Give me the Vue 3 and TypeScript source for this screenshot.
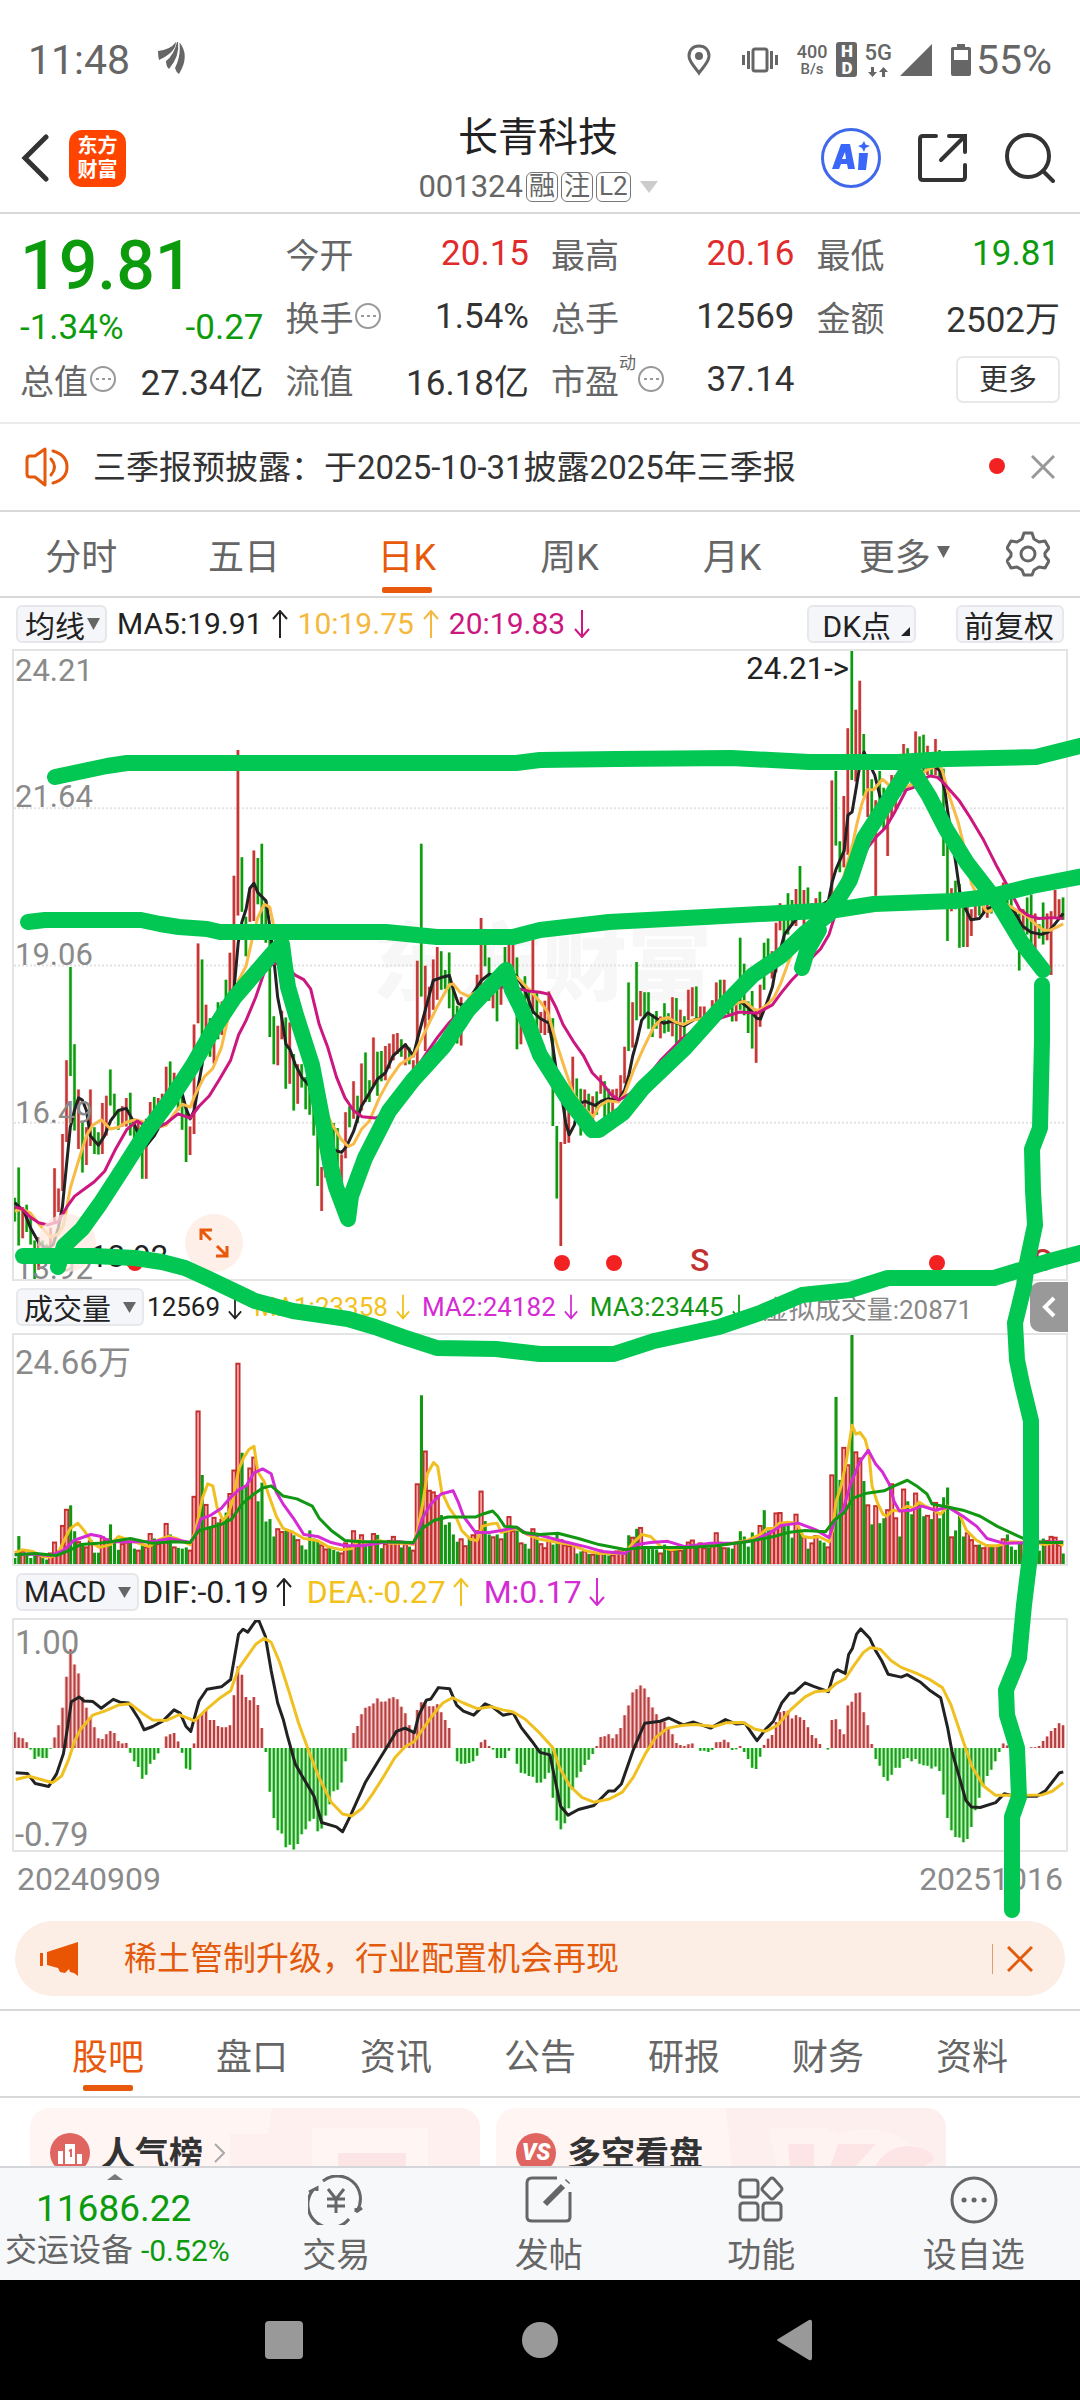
<script setup lang="ts">
import { ref } from 'vue'

/* Every panel is plotted on the same horizontal scale: one bar each 11.61 units. */
const FIRST_X = 38
const STEP = 11.61
const barX = (i: number): number => Math.round((FIRST_X + i * STEP) * 10) / 10

/* Indexes of the trading days that closed lower. */
const downDays = new Set<number>([
  0, 1, 3, 4, 5, 7, 8, 14, 15, 17, 20, 21, 24, 25, 26, 29, 30, 32, 35, 39, 41, 42, 43, 47, 49, 51, 53, 57, 58, 61,
  62, 63, 64, 65, 68, 70, 72, 73, 74, 75, 76, 79, 80, 81, 84, 86, 88, 89, 91, 92, 97, 99, 102, 107, 108, 109, 110,
  111, 114, 118, 119, 121, 123, 126, 128, 129, 131, 135, 136, 141, 142, 144, 146, 148, 149, 154, 156, 158, 159,
  160, 161, 163, 164, 166, 168, 171, 174, 177, 179, 180, 182, 183, 184, 185, 188, 189, 193, 194, 195, 197, 199,
  202, 203, 206, 207, 210, 213, 215, 217, 218, 222, 224, 225, 227, 228, 230, 232, 233, 234, 236, 237, 238, 242,
  245, 247, 249, 250, 251, 252, 254, 255, 257, 258, 263,
])

/* High and low of each day. */
const ranges = `1328-1385 1256-1442 1350-1425 1345-1410 1375-1440 1430-1524 1422-1500 1430-1450 1440-1475 1400-1450
1258-1385 1306-1362 1176-1312 1000-1195 778-1038 962-1168 1070-1212 1145-1268 1160-1250 1070-1205
1160-1224 1172-1225 1102-1224 1085-1180 1022-1108 1080-1130 1120-1166 1110-1158 1090-1158 1078-1180
1140-1230 1150-1200 1150-1283 1140-1283 1100-1180 1088-1160 1090-1150 1080-1140 1016-1090 1003-1080
1030-1105 1060-1120 1050-1166 1110-1243 1158-1226 915-1176 722-912 760-950 868-960 900-992
900-1008 862-950 860-940 808-900 744-850 560-840 260-655 516-646 658-752 590-670
500-668 518-628 484-675 620-720 680-945 895-1010 918-1012 882-950 898-1068 910-1056
985-1120 1010-1104 1010-1065 1040-1117 1060-1130 1080-1180 1120-1300 1255-1360 1200-1280 1180-1300
1150-1230 1162-1310 1225-1295 1124-1234 1110-1160 1050-1140 1085-1150 1008-1120 982-1100 1048-1100
946-1062 980-1085 978-1050 966-1048 960-1020 938-1000 935-985 950-992 960-1012 970-1010
1000-1065 763-1030 484-848 775-978 825-905 760-880 730-856 740-832 785-830 743-876
820-930 870-960 850-965 870-920 860-900 850-890 796-870 661-830 715-776 755-858
800-876 830-907 790-868 730-800 710-830 720-800 755-974 880-962 800-900 830-920
708-890 840-940 885-935 858-940 836-935 900-1157 1157-1330 1195-1443 1100-1200 1090-1197
992-1105 1044-1120 1068-1180 1070-1130 1080-1140 1086-1150 1075-1130 1036-1080 1050-1150 1068-1150
1070-1140 1068-1100 1036-1090 968-1055 815-978 862-970 766-905 835-895 838-900 838-925
890-945 883-925 896-948 864-936 888-932 850-943 852-962 880-965 895-950 832-905
826-895 824-900 872-905 872-930 885-905 857-890 815-880 808-860 808-850 840-890
830-908 840-907 708-880 770-893 860-935 835-972 880-1006 820-920 720-832 710-780
740-805 672-790 626-690 650-760 602-700 618-680 592-680 537-660 594-680 588-650
625-660 614-660 598-640 630-680 620-660 333-620 310-488 478-552 370-540 208-510
24-332 164-335 95-280 222-370 300-420 330-440 380-608 310-430 350-450 400-513
320-420 320-400 310-370 246-360 256-340 290-340 216-350 228-330 224-330 250-320
290-320 234-320 260-330 305-513 430-716 590-645 572-640 580-732 620-730 630-730
640-704 600-660 610-655 600-650 600-660 590-650 600-640 600-650 576-620 590-650
610-670 640-720 650-786 640-700 612-700 605-740 650-745 676-710 624-724 650-714
645-797 594-660 616-660 612-665`.split(/\s+/).map((r) => r.split('-').map(Number))

const toNumbers = (text: string): number[] => text.trim().split(/\s+/).map(Number)

const VOLUME_BASE = 723
const volumes = toNumbers(`708 654 690 700 708 702 700 705 712 695 668 690 627 587 578 642 667 675 680 665 695 695 655 660 625
665 688 672 668 660 685 688 675 680 647 660 672 668 622 650 680 683 685 682 688 555 344 503 575 630 607 620 612 596 548
490 226 448 530 485 458 568 522 618 612 655 635 642 640 640 652 662 677 687 640 660 665 675 685 682 688 692 695 670 680
640 668 650 672 670 647 651 684 672 664 654 665 682 672 680 688 524 306 443 540 544 553 602 626 620 650 668 660 677 658
650 640 542 617 650 655 650 660 640 605 640 640 670 673 685 635 650 672 682 665 675 650 662 675 677 675 697 692 690 698
698 698 688 698 702 700 690 690 685 652 656 636 632 680 682 685 687 695 675 682 688 685 688 682 668 663 675 670 682 683
672 645 668 682 682 685 670 642 655 680 645 655 627 590 640 640 596 595 620 622 658 599 640 655 685 670 652 665 670 680
502 310 515 434 477 157 445 460 518 576 625 578 622 610 588 524 608 655 537 568 600 547 575 605 602 612 570 610 558 534
655 640 600 655 645 662 676 675 682 675 680 677 675 660 650 680 688 670 670 680 680 675 690 660 664 654 656 675 697`)

const MACD_ZERO = 1171
const histogram = toNumbers(`1132 1145 1147 1157 1175 1198 1192 1196 1196 1173 1145 1115 1072 995 927 965 987 1046 1072 1095 1120 1147
1149 1137 1129 1134 1154 1160 1159 1183 1204 1218 1247 1237 1210 1200 1184 1171 1143 1137 1134 1155 1183 1222 1225 1160
1095 1087 1077 1102 1102 1117 1120 1120 1115 1041 970 990 1045 1053 1045 1065 1122 1181 1279 1344 1374 1382 1416 1410
1422 1408 1384 1372 1352 1346 1377 1370 1338 1310 1278 1274 1256 1204 1172 1134 1117 1088 1072 1068 1061 1049 1057 1056
1049 1046 1051 1069 1085 1115 1132 1077 1058 1057 1068 1068 1063 1083 1102 1122 1171 1204 1210 1210 1208 1204 1190 1157
1151 1166 1175 1196 1196 1196 1178 1171 1210 1232 1234 1240 1242 1257 1256 1247 1232 1294 1350 1372 1357 1320 1275 1244
1230 1213 1200 1186 1166 1144 1142 1137 1147 1137 1122 1090 1066 1034 1026 1017 1024 1046 1071 1088 1104 1106 1122 1137
1159 1164 1166 1162 1160 1171 1178 1178 1181 1176 1157 1156 1151 1157 1176 1174 1166 1181 1198 1220 1223 1193 1164 1148
1139 1107 1083 1080 1079 1098 1090 1095 1102 1120 1139 1147 1161 1171 1175 1102 1100 1125 1137 1066 1057 1036 1034 1083
1115 1161 1198 1215 1243 1252 1237 1220 1220 1198 1196 1204 1198 1210 1214 1215 1222 1217 1228 1286 1344 1374 1391 1392
1404 1396 1366 1325 1294 1267 1240 1225 1204 1181 1160 1165 1170 1170 1171 1175 1171 1169 1169 1166 1154 1143 1129 1122
1110 1115`)

const candlePath = (down: boolean): string =>
  ranges.map(([hi, lo], i) => (downDays.has(i) === down ? `M${barX(i)} ${hi}V${lo}` : '')).join('')
const volumeBars = volumes.map((top, i) => ({ i, top }))
const upVolumes = volumeBars.filter((v) => !downDays.has(v.i))
const downVolumes = volumeBars.filter((v) => downDays.has(v.i))
const histPath = (up: boolean): string =>
  histogram.map((y, i) => (y < MACD_ZERO === up ? `M${barX(i)} ${MACD_ZERO}V${y}` : '')).join('')

const ma5 = `38,1340 65,1360 84,1400 108,1435 131,1450 150,1440 165,1400 177,1350 189,1250 200,1160 212,1120 224,1090 235,1095 247,1120 258,1180 282,1203 300,1180 317,1145 340,1120 363,1115 380,1140 400,1180 421,1204 445,1180 468,1145 490,1110 514,1060 526,1080 537,1115 549,1140 561,1120 572,1065 584,1010 596,940 610,915 640,900 665,870 677,830 689,720 700,670 712,640 723,590 735,578 746,600 770,620 781,680 793,760 804,850 816,900 828,962 840,975 855,1010 875,1042 895,1060 920,1120 945,1190 970,1215 990,1220 1005,1205 1025,1170 1048,1110 1070,1080 1095,1045 1118,1030 1140,990 1176,963 1199,990 1211,950 1234,880 1257,810 1280,803 1304,798 1315,830 1330,865 1350,870 1373,840 1397,810 1420,795 1443,800 1478,790 1500,800 1525,835 1548,885 1568,900 1594,912 1606,970 1618,1040 1632,1090 1643,1150 1653,1178 1668,1155 1680,1105 1699,1098 1728,1108 1748,1097 1768,1092 1796,1098 1815,1070 1827,1035 1838,990 1850,955 1864,905 1882,887 1903,898 1928,912 1953,907 1988,918 2018,903 2048,900 2082,880 2117,870 2148,858 2175,875 2199,900 2210,902 2228,865 2245,825 2257,770 2280,700 2303,675 2328,650 2368,640 2408,620 2419,575 2430,545 2454,500 2465,415 2477,408 2489,350 2500,295 2512,265 2528,295 2543,320 2558,370 2578,400 2608,350 2638,310 2668,300 2718,300 2733,310 2748,360 2756,410 2779,530 2791,600 2808,640 2823,665 2848,662 2868,640 2908,625 2938,635 2953,650 2973,680 2998,695 3028,700 3048,695 3068,675 3092,650`
const ma10 = `38,1360 60,1355 84,1365 108,1390 142,1422 165,1415 180,1395 200,1305 224,1240 247,1180 265,1155 290,1142 317,1164 340,1160 363,1148 390,1142 421,1150 450,1162 480,1155 505,1125 526,1105 549,1112 565,1080 590,1040 615,1020 640,970 665,880 690,810 712,775 730,710 746,660 765,628 781,635 795,690 810,790 840,870 880,980 920,1080 960,1150 990,1190 1010,1206 1025,1200 1048,1165 1071,1145 1100,1090 1130,1045 1160,1010 1199,990 1211,970 1240,920 1270,870 1304,820 1315,818 1335,838 1360,848 1397,830 1440,810 1478,790 1505,805 1540,835 1568,860 1590,885 1606,930 1620,970 1640,1020 1665,1080 1690,1110 1723,1135 1740,1110 1765,1097 1796,1100 1815,1080 1840,1025 1870,970 1900,920 1920,903 1940,898 1965,910 1985,915 2010,905 2048,900 2100,880 2148,862 2165,860 2190,878 2205,882 2230,868 2250,850 2270,815 2290,770 2310,730 2340,690 2380,650 2410,620 2430,600 2450,570 2480,480 2490,440 2505,390 2520,355 2540,355 2565,330 2580,340 2600,370 2630,350 2660,340 2690,310 2730,295 2740,310 2760,370 2785,430 2803,490 2825,580 2850,620 2868,645 2880,645 2908,620 2935,632 2960,645 2985,655 3010,675 3035,690 3055,690 3075,682 3092,675`
const ma20 = `38,1350 60,1355 84,1375 108,1388 135,1393 165,1385 190,1350 212,1325 240,1308 270,1290 300,1265 330,1215 365,1165 395,1145 421,1158 450,1162 480,1150 514,1128 549,1138 575,1110 605,1085 635,1045 667,1000 690,940 712,905 740,850 765,790 790,770 820,770 855,797 880,808 900,830 925,915 950,970 975,1040 1000,1090 1025,1120 1050,1135 1090,1138 1120,1125 1160,1080 1200,1030 1240,980 1270,945 1304,910 1340,880 1380,860 1420,835 1455,825 1505,830 1535,835 1568,838 1595,843 1615,875 1635,915 1665,955 1695,990 1720,1030 1750,1055 1775,1082 1798,1095 1830,1080 1870,1050 1920,1000 1980,950 2040,915 2100,898 2150,885 2200,888 2245,868 2270,840 2300,810 2330,785 2355,760 2385,735 2410,700 2425,660 2450,620 2475,570 2500,530 2525,490 2550,465 2575,445 2600,410 2635,355 2655,350 2680,330 2705,322 2725,325 2745,340 2790,382 2820,420 2860,475 2900,540 2940,600 2965,640 2990,655 3020,662 3060,660 3092,662`

const volMa1 = `38,695 60,688 90,692 120,705 142,706 165,695 185,660 200,635 222,622 240,640 265,672 285,682 317,675 340,655 375,665 400,672 430,680 460,662 485,655 510,660 549,675 565,640 585,560 600,525 615,530 628,585 645,615 660,600 675,560 690,490 705,460 720,440 735,432 746,495 765,520 781,560 800,605 820,635 850,645 880,660 920,665 950,680 990,688 1020,685 1040,665 1071,672 1100,665 1130,672 1180,672 1199,675 1211,640 1225,580 1240,500 1258,472 1270,482 1282,545 1304,585 1325,610 1340,640 1365,662 1385,665 1400,630 1420,625 1443,622 1455,645 1478,640 1500,635 1530,650 1568,662 1620,670 1660,675 1700,690 1740,697 1780,697 1815,695 1840,670 1865,650 1890,655 1920,680 1950,688 2010,680 2060,678 2110,675 2170,665 2210,650 2230,635 2250,635 2265,622 2290,620 2315,622 2335,655 2355,658 2380,655 2410,668 2420,640 2430,570 2445,530 2460,470 2477,380 2488,402 2500,398 2515,415 2526,450 2535,530 2550,570 2567,600 2578,605 2595,590 2615,592 2637,580 2655,585 2672,570 2690,580 2715,590 2735,600 2755,580 2775,590 2790,600 2810,640 2840,665 2870,678 2900,678 2940,668 3000,670 3040,675 3075,668 3092,678`
const volMa2 = `38,700 84,698 142,702 180,690 210,665 260,650 290,655 317,668 360,668 400,668 440,668 490,660 549,670 565,650 580,612 610,602 640,585 665,560 690,540 712,530 735,498 760,488 785,500 800,545 820,575 850,610 880,650 920,655 960,670 1000,678 1050,678 1110,670 1160,668 1199,672 1211,650 1225,610 1250,575 1280,550 1315,542 1330,570 1345,605 1380,645 1420,645 1455,640 1500,632 1530,648 1568,652 1640,668 1700,680 1750,692 1815,697 1850,675 1890,670 1940,667 1990,680 2060,672 2130,672 2190,665 2240,645 2270,628 2320,622 2370,638 2410,658 2425,620 2450,590 2475,520 2500,470 2524,442 2545,475 2565,495 2585,525 2600,570 2615,592 2650,590 2680,580 2720,590 2755,582 2800,605 2840,630 2870,660 2920,672 3000,670 3092,668`
const volMa3 = `38,700 100,697 160,702 200,688 230,675 280,672 317,668 375,660 440,672 500,668 549,670 575,640 610,632 640,625 670,612 700,575 735,550 760,535 785,530 820,555 860,562 905,580 925,610 960,640 1000,665 1050,668 1110,668 1199,670 1225,635 1260,615 1300,607 1380,607 1400,600 1430,592 1445,605 1465,630 1500,632 1520,645 1568,650 1620,647 1680,660 1740,675 1815,687 1870,682 1940,682 2000,682 2080,678 2170,668 2250,655 2290,645 2340,640 2400,643 2425,615 2455,595 2480,560 2520,548 2570,542 2600,530 2638,516 2665,530 2695,550 2710,575 2755,582 2800,590 2850,605 2900,630 2950,650 2990,665 3040,670 3092,670`

const dif = `41,1232 75,1234 98,1259 137,1266 160,1235 180,1185 192,1120 203,1057 226,1045 240,1055 265,1056 290,1073 325,1051 345,1058 370,1060 400,1100 415,1126 440,1118 470,1104 502,1077 520,1085 537,1118 551,1130 562,1095 575,1055 598,1026 640,1020 667,1002 690,890 703,878 717,885 740,857 750,858 768,895 785,980 804,1060 820,1100 832,1140 855,1210 875,1240 910,1290 932,1355 975,1366 993,1378 1015,1340 1060,1255 1098,1202 1125,1165 1150,1130 1175,1122 1202,1133 1215,1090 1237,1053 1250,1050 1272,1022 1305,1025 1325,1065 1345,1080 1375,1090 1408,1062 1430,1070 1460,1090 1490,1085 1513,1120 1545,1155 1568,1182 1597,1188 1612,1250 1628,1315 1650,1337 1680,1323 1725,1313 1768,1277 1785,1277 1805,1260 1840,1175 1873,1110 1918,1105 1943,1097 1985,1114 2015,1107 2065,1122 2108,1101 2140,1112 2165,1110 2185,1135 2200,1153 2225,1125 2248,1105 2272,1060 2295,1036 2308,1035 2340,1010 2365,1019 2408,1032 2424,985 2435,978 2457,987 2467,940 2478,925 2490,890 2502,877 2528,900 2545,930 2563,955 2582,989 2620,996 2637,990 2675,1008 2705,1030 2735,1047 2755,1120 2768,1180 2790,1245 2808,1300 2825,1317 2850,1318 2895,1306 2920,1284 2950,1290 3015,1290 3040,1277 3060,1255 3080,1233 3092,1230`
const dea = `41,1249 80,1241 120,1250 148,1257 175,1240 195,1200 212,1155 230,1125 265,1090 300,1080 340,1065 375,1062 410,1085 440,1102 480,1103 517,1089 562,1104 600,1073 635,1048 667,1030 690,975 740,915 765,900 785,910 810,960 840,1040 865,1110 895,1180 925,1245 960,1305 993,1334 1020,1339 1050,1320 1080,1285 1110,1245 1145,1195 1175,1168 1202,1155 1230,1120 1260,1085 1285,1060 1313,1047 1345,1060 1385,1074 1425,1069 1460,1077 1490,1082 1525,1100 1568,1135 1605,1170 1625,1220 1655,1265 1690,1293 1725,1305 1770,1297 1808,1280 1840,1243 1875,1185 1905,1145 1940,1122 1985,1115 2020,1113 2075,1118 2110,1109 2160,1108 2195,1125 2225,1130 2260,1115 2300,1075 2340,1045 2370,1032 2408,1029 2430,1012 2457,1000 2480,970 2510,935 2530,923 2560,928 2590,955 2620,972 2665,987 2705,1003 2740,1022 2765,1065 2795,1140 2825,1215 2860,1265 2895,1288 2950,1288 3030,1287 3060,1278 3092,1257`

/* Freehand strokes the user has drawn over the charts. */
const strokes: string[] = [
  '55,777 88,770 107,766 127,763 516,763 540,760 616,759 731,758 809,762 898,762 946,759 1036,757 1084,745',
  '28,922 45,920 141,920 160,924 179,927 207,929 220,932 386,932 437,937 513,937 540,930 609,922 705,917 836,910 874,904 953,901 988,897 1032,886 1084,876',
  '23,1256 93,1256 135,1258 162,1262 185,1268 207,1278 255,1301 293,1311 348,1319 375,1327 403,1337 437,1348 496,1349 540,1354 614,1354 654,1341 719,1327 760,1313 802,1295 850,1290 888,1278 994,1278 1050,1261 1084,1252',
  '58,1267 64,1246 82,1229 100,1204 124,1167 145,1134 170,1100 193,1065 213,1030 234,998 272,954 282,944 284,960 288,987 296,1015 312,1065 324,1128 330,1163 336,1187 348,1219 351,1196 365,1158 389,1111 413,1080 444,1046 468,1010 506,970 512,990 520,1006 529,1026 540,1055 568,1099 592,1130 599,1130 623,1113 643,1088 685,1048 719,1010 753,975 781,956 805,933 829,914 850,880 864,838 891,796 910,766 929,796 946,829 967,863 998,903 1022,943 1043,970',
  '819,930 807,951 802,968',
  '1042,985 1042,1040 1040,1128 1032,1149 1033,1191 1035,1225 1027,1263 1024,1286 1015,1323 1017,1360 1022,1384 1031,1421 1031,1548 1024,1605 1019,1658 1006,1690 1007,1715 1017,1748 1019,1797 1012,1817 1012,1910',
]

interface Quote { label: string; value: string; tone?: string; info?: boolean; sup?: string }
const quotes: Quote[] = [
  { label: '今开', value: '20.15', tone: 'up' },
  { label: '最高', value: '20.16', tone: 'up' },
  { label: '最低', value: '19.81', tone: 'down' },
  { label: '换手', value: '1.54%', info: true },
  { label: '总手', value: '12569' },
  { label: '金额', value: '2502万' },
  { label: '流值', value: '16.18亿' },
  { label: '市盈', value: '37.14', info: true, sup: '动' },
]
const periods = ['分时', '五日', '日K', '周K', '月K']
const activePeriod = ref('日K')
const sections = ['股吧', '盘口', '资讯', '公告', '研报', '财务', '资料']
const activeSection = ref('股吧')

const priceMarks = [
  { text: '24.21', top: 8 },
  { text: '21.64', top: 134 },
  { text: '19.06', top: 292 },
  { text: '16.49', top: 450 },
  { text: '13.92', top: 606 },
]
const eventDots = [11.6, 52.2, 57.1, 87.8]
const sells = [65.2, 97.8]

const averages = [
  { text: 'MA5:19.91', tone: 'ink', up: true },
  { text: '10:19.75', tone: 'amber', up: true },
  { text: '20:19.83', tone: 'rose', up: false },
]
const volumeStats = [
  { text: '12569', tone: 'ink' },
  { text: 'MA1:23358', tone: 'gold' },
  { text: 'MA2:24182', tone: 'violet' },
  { text: 'MA3:23445', tone: 'green' },
]
const macdStats = [
  { text: 'DIF:-0.19', tone: 'ink', up: true },
  { text: 'DEA:-0.27', tone: 'gold', up: true },
  { text: 'M:0.17', tone: 'violet', up: false },
]
</script>

<template>
  <div class="phone">
    <div class="status">
      <span class="clock">11:48</span>
      <svg class="wing" width="28" height="32" viewBox="0 0 28 32" fill="currentColor">
        <path d="M0 9Q12 8 18 0Q18 10 1 18Q0 14 0 9Z" /><path d="M20 0Q22 14 11 27Q8 24 8 19Q16 13 19 0Z" /><path d="M22 1Q32 14 21 32Q18 30 17 26Q23 14 21.500 1Z" />
      </svg>
      <div class="status-right">
        <svg class="pin" width="24" height="32" viewBox="0 0 24 32"><path d="M12 2C6 2 2 6 2 12c0 6 6 11 10 17 4-6 10-11 10-17 0-6-4-10-10-10Z" fill="none" stroke="currentColor" stroke-width="3" /><circle cx="12" cy="12" r="4" fill="currentColor" /></svg>
        <svg class="buzz" width="36" height="28" viewBox="0 0 36 28" fill="none" stroke="currentColor" stroke-width="3"><rect x="11" y="3" width="14" height="22" rx="2" /><path d="M6.500 5v18M1.500 9v10M29.500 5v18M34.500 9v10" /></svg>
        <div class="speed"><span>400</span><small>B/s</small></div>
        <div class="hd"><span>H</span><span>D</span></div>
        <div class="net"><span>5G</span>
          <svg width="20" height="10" viewBox="0 0 20 10" fill="currentColor"><path d="M3 0h3v5h3l-4.500 5L0 5h3ZM14 10h3V5h3l-4.500-5L11 5h3Z" /></svg>
        </div>
        <svg class="signal" width="32" height="32" viewBox="0 0 32 32"><path d="M32 0V32H0Z" fill="currentColor" /></svg>
        <svg class="battery" width="20" height="32" viewBox="0 0 20 32"><path d="M6 0h8v3h4q2 0 2 2v25q0 2-2 2H2q-2 0-2-2V5q0-2 2-2h4Z" fill="currentColor" /><path d="M3 6h14v10H3z" fill="#fff" /></svg>
        <span class="clock">55%</span>
      </div>
    </div>

    <header class="top">
      <div class="top-left">
        <button type="button" class="plain" aria-label="返回">
          <svg width="28" height="48" viewBox="0 0 28 48"><path d="M25 3L4 24L25 45" fill="none" stroke="#333" stroke-width="5" stroke-linecap="round" stroke-linejoin="miter" /></svg>
        </button>
        <a href="#home" class="logo"><span>东方</span><span>财富</span></a>
      </div>
      <div class="title">
        <h1>长青科技</h1>
        <p><span>001324</span><b>融</b><b>注</b><b>L2</b><svg width="18" height="12" viewBox="0 0 18 12"><path d="M0 0h18L9 12Z" fill="#ccc" /></svg></p>
      </div>
      <div class="top-right">
        <button type="button" class="plain" aria-label="Ai">
          <svg width="60" height="60" viewBox="0 0 60 60" fill="#3a66fa"><circle cx="30" cy="30" r="28.500" fill="none" stroke="#3f68ea" stroke-width="3" /><path fill-rule="evenodd" d="M20 16h9l5 25h-7l-1-5h-6l-2 5h-7ZM24 24l-3 7h4ZM38 25h9l-2 17h-8ZM43 13l1.500 3.500L49 18l-4.500 2L43 24l-2-4-4-2 4-1.500Z" /></svg>
        </button>
        <button type="button" class="plain" aria-label="分享">
          <svg width="50" height="50" viewBox="0 0 50 50" fill="none" stroke="#333" stroke-width="4" stroke-linecap="round"><path d="M18 3H5Q2 3 2 6V44Q2 47 5 47H44Q47 47 47 44V32M31 3H47V19M46 4L23 27" /></svg>
        </button>
        <button type="button" class="plain" aria-label="搜索">
          <svg width="50" height="50" viewBox="0 0 50 50" fill="none" stroke="#333" stroke-width="4" stroke-linecap="round"><circle cx="23" cy="23" r="21" /><path d="M38 38L48 48" /></svg>
        </button>
      </div>
    </header>

    <section class="quote">
      <div class="main-price">
        <strong>19.81</strong>
        <p class="down"><span>-1.34%</span><span>-0.27</span></p>
        <div class="cell">
          <span class="label">总值<svg class="info" viewBox="0 0 26 26"><circle cx="13" cy="13" r="12" /><path d="M6 13h3M12 13h3M18 13h3" /></svg></span>
          <span>27.34亿</span>
        </div>
      </div>
      <div class="quote-grid">
        <div v-for="q in quotes" :key="q.label" class="cell">
          <span class="label">{{ q.label }}<sup v-if="q.sup">{{ q.sup }}</sup><svg v-if="q.info" class="info" viewBox="0 0 26 26"><circle cx="13" cy="13" r="12" /><path d="M6 13h3M12 13h3M18 13h3" /></svg></span>
          <span :class="q.tone">{{ q.value }}</span>
        </div>
        <div class="cell end"><button type="button" class="more">更多</button></div>
      </div>
    </section>

    <div class="notice">
      <svg width="44" height="40" viewBox="0 0 44 40" fill="none" stroke="#e35a0c" stroke-width="3" stroke-linejoin="round"><path d="M2 12Q2 9 5 9H10L20 2V38L10 30H5Q2 30 2 27Z" /><path d="M26 12Q33 20 26 28M28 4Q42 8 42 20T28 36" stroke-linecap="round" /></svg>
      <a href="#report">三季报预披露：于2025-10-31披露2025年三季报</a>
      <i class="dot"></i>
      <button type="button" class="plain" aria-label="关闭"><svg width="24" height="24" viewBox="0 0 24 24"><path d="M1 1L23 23M23 1L1 23" stroke="#999" stroke-width="3" /></svg></button>
    </div>

    <nav class="periods">
      <button v-for="p in periods" :key="p" type="button" :class="{ on: p === activePeriod }" @click="activePeriod = p"><span>{{ p }}</span></button>
      <button type="button"><span>更多<svg class="caret" width="13" height="12" viewBox="0 0 13 12"><path d="M0 0h13L6.500 12Z" fill="#666" /></svg></span></button>
      <button type="button" class="gear" aria-label="设置">
        <svg width="44" height="46" viewBox="0 0 44 46" fill="none" stroke="#666" stroke-width="3" stroke-linejoin="round"><path d="M18 2h8l2 6 5 3 6-1 4 7-4 5v3l4 5-4 7-6-1-5 3-2 5h-8l-2-5-5-3-6 1-4-7 4-5v-3l-4-5 4-7 6 1 5-3Z" /><circle cx="22" cy="23" r="7" /></svg>
      </button>
    </nav>

    <section class="charts">
      <div class="bar average">
        <button type="button" class="chip tight">均线<svg width="13" height="12" viewBox="0 0 13 12"><path d="M0 0h13L6.500 12Z" fill="#666" /></svg></button>
        <span v-for="a in averages" :key="a.text" :class="a.tone">{{ a.text }}<svg class="arrow" viewBox="0 0 16 28"><path :d="a.up ? 'M8 28V2M1 9L8 1L15 9' : 'M8 0V26M1 19L8 27L15 19'" /></svg></span>
        <button type="button" class="chip dk">DK点<svg width="9" height="9" viewBox="0 0 9 9"><path d="M9 0V9H0Z" fill="#222" /></svg></button>
        <button type="button" class="chip">前复权</button>
      </div>

      <div class="frame price">
        <span class="watermark">东方财富</span>
        <svg class="plot" viewBox="36 24 3064 1498" preserveAspectRatio="none">
          <path class="grid" d="M36 399H3100M36 774H3100M36 1149H3100" />
          <path :d="candlePath(false)" stroke="#f6b5b5" stroke-width="10" />
          <path :d="candlePath(true)" stroke="#a9f0a9" stroke-width="10" />
          <path :d="candlePath(false)" stroke="#c43737" stroke-width="7" />
          <path :d="candlePath(true)" stroke="#129712" stroke-width="7" />
          <polyline class="line" :points="ma5" stroke="#222" />
          <polyline class="line" :points="ma10" stroke="#f8bb47" />
          <polyline class="line" :points="ma20" stroke="#cc1680" />
        </svg>
        <span v-for="m in priceMarks" :key="m.text" class="mark" :style="{ top: m.top + 'px' }">{{ m.text }}</span>
        <span class="peak">24.21-&gt;</span>
        <span class="trough">&lt;-13.92</span>
        <button type="button" class="round prev" aria-label="展开"><svg width="28" height="28" viewBox="0 0 28 28"><path d="M16 7L23 14L16 21" /></svg></button>
        <button type="button" class="round full" aria-label="全屏"><svg width="30" height="30" viewBox="0 0 30 30"><path d="M2 12V2H13M2 2L12 12M28 18V28H17M28 28L18 18" /></svg></button>
        <i v-for="d in eventDots" :key="d" class="event" :style="{ left: d + '%' }"></i>
        <b v-for="s in sells" :key="s" class="sell" :style="{ left: s + '%' }">S</b>
      </div>

      <div class="bar volume-bar">
        <button type="button" class="chip">成交量<svg width="13" height="11" viewBox="0 0 13 11"><path d="M0 0h13L6.500 11Z" fill="#666" /></svg></button>
        <span v-for="v in volumeStats" :key="v.text" :class="v.tone">{{ v.text }}<svg class="arrow" viewBox="0 0 16 28"><path d="M8 0V26M1 19L8 27L15 19" /></svg></span>
        <span class="virtual">虚拟成交量:20871</span>
        <button type="button" class="fold" aria-label="收起"><svg width="14" height="22" viewBox="0 0 14 22"><path d="M12 2L3 11L12 20" fill="none" stroke="#fff" stroke-width="4" /></svg></button>
      </div>
      <div class="frame volume">
        <svg class="plot" viewBox="36 157 3064 566" preserveAspectRatio="none">
          <rect v-for="v in upVolumes" :key="v.i" :x="barX(v.i) - 5" :y="v.top + 2" width="10" :height="VOLUME_BASE - v.top" fill="#f6a9a9" stroke="#c43030" stroke-width="5" />
          <rect v-for="v in downVolumes" :key="v.i" :x="barX(v.i) - 4" :y="v.top" width="9" :height="VOLUME_BASE - v.top" fill="#129712" />
          <polyline class="line" :points="volMa1" stroke="#f0c020" />
          <polyline class="line" :points="volMa2" stroke="#d42bd4" />
          <polyline class="line" :points="volMa3" stroke="#129712" />
        </svg>
        <span class="mark big">24.66万</span>
      </div>

      <div class="bar macd-bar">
        <button type="button" class="chip">MACD<svg width="13" height="11" viewBox="0 0 13 11"><path d="M0 0h13L6.500 11Z" fill="#666" /></svg></button>
        <span v-for="m in macdStats" :key="m.text" :class="m.tone">{{ m.text }}<svg class="arrow" viewBox="0 0 16 28"><path :d="m.up ? 'M8 28V2M1 9L8 1L15 9' : 'M8 0V26M1 19L8 27L15 19'" /></svg></span>
      </div>
      <div class="frame macd">
        <svg class="plot" viewBox="36 855 3064 568" preserveAspectRatio="none">
          <path :d="histPath(true)" stroke="#fbbcbc" stroke-width="11" />
          <path :d="histPath(false)" stroke="#9dfc9d" stroke-width="11" />
          <path :d="histPath(true)" stroke="#b04242" stroke-width="6" />
          <path :d="histPath(false)" stroke="#279127" stroke-width="6" />
          <polyline class="line" :points="dif" stroke="#222" />
          <polyline class="line" :points="dea" stroke="#f0c020" />
        </svg>
        <span class="mark high">1.00</span>
        <span class="mark low">-0.79</span>
      </div>
      <div class="dates"><span>20240909</span><span>20251016</span></div>

      <svg class="ink-layer" viewBox="0 598 1080 1323" preserveAspectRatio="none">
        <polyline v-for="(s, i) in strokes" :key="i" :points="s" />
      </svg>
    </section>

    <div class="banner">
      <svg width="40" height="34" viewBox="0 0 40 34" fill="#ea5504"><path d="M0 11h3v13H0ZM7 10L38 0V34L34 31L30 30L29 27L25 31L20 30L18 26L7 23Z" /></svg>
      <a href="#topic">稀土管制升级，行业配置机会再现</a>
      <i></i>
      <button type="button" class="plain" aria-label="关闭"><svg width="26" height="26" viewBox="0 0 26 26"><path d="M1 1L25 25M25 1L1 25" stroke="#e35a0c" stroke-width="3" /></svg></button>
    </div>

    <nav class="sections">
      <button v-for="s in sections" :key="s" type="button" :class="{ on: s === activeSection }" @click="activeSection = s"><span>{{ s }}</span></button>
    </nav>

    <div class="cards">
      <a href="#rank" class="card">
        <svg class="ghost" width="250" height="60" viewBox="0 0 250 60"><path d="M42 0H250V60H0V26H38Z" fill="#fdf0ee" /><path d="M82 20H198V60H82Z" fill="#fff5f3" /><path d="M108 45H176V60H108Z" fill="#fbe6e5" /></svg>
        <svg width="40" height="40" viewBox="0 0 40 40"><circle cx="20" cy="20" r="20" fill="#e06560" /><path d="M8 18h5v13H8ZM15 11h10v20H15ZM27 21h5v10h-5Z" fill="#fff" /><path d="M19 18l2-1v7" fill="none" stroke="#e06560" stroke-width="2" /></svg>
        <b>人气榜</b>
        <svg width="11" height="20" viewBox="0 0 11 20"><path d="M1 1L10 10L1 19" fill="none" stroke="#aaa" stroke-width="2" /></svg>
      </a>
      <a href="#vote" class="card">
        <svg class="ghost" width="220" height="60" viewBox="0 0 220 60"><path d="M0 0H220V60H6Z" fill="#fdefee" /><path d="M42 20H100L112 26Q160 8 205 52L200 60H52Z" fill="#fff3f1" /><path d="M62 36H88V60H64ZM150 36L128 60H104L112 36ZM148 60Q160 38 184 38Q206 40 208 52L196 60Z" fill="#fce5e4" /></svg>
        <span class="vs">VS</span>
        <b>多空看盘</b>
      </a>
    </div>

    <footer class="dock">
      <button type="button" class="index">
        <svg width="16" height="6" viewBox="0 0 16 6"><path d="M8 0L16 6H0Z" fill="#77797c" /></svg>
        <strong>11686.22</strong>
        <span>交运设备 <em>-0.52%</em></span>
      </button>
      <a href="#trade">
        <svg width="56" height="50" viewBox="0 0 56 50"><path d="M15 6A23 23 0 0 1 49 36M41 44A23 23 0 0 1 5 15M1 17L9 13V16M48 37L54 33M48 37L48 33M20 14L28 24L36 14M28 24V38M19 24H37M19 31H37" /></svg>
        <span>交易</span>
      </a>
      <a href="#post">
        <svg width="48" height="50" viewBox="0 0 48 50"><path d="M32 3H7Q2 3 2 8V42Q2 46 7 46H41Q45 46 45 42V17" /><path d="M20 29L38 11M42 7L43 6" stroke-width="6" /></svg>
        <span>发帖</span>
      </a>
      <a href="#tools">
        <svg width="46" height="50" viewBox="0 0 46 50"><rect x="2" y="5" width="18" height="17" rx="3" /><rect x="2" y="28" width="18" height="17" rx="3" /><rect x="25" y="28" width="18" height="17" rx="3" /><path d="M32 4Q34 2 36 4L43 12Q45 14 43 16L36 23Q34 25 32 23L25 16Q23 14 25 12Z" /></svg>
        <span>功能</span>
      </a>
      <a href="#favorite">
        <svg width="48" height="50" viewBox="0 0 48 50"><circle cx="24" cy="25" r="22" /><path d="M14 25h.1M24 25h.1M34 25h.1" stroke-width="5" stroke-linecap="round" /></svg>
        <span>设自选</span>
      </a>
    </footer>

    <div class="system">
      <button type="button" class="plain" aria-label="最近任务"><svg width="38" height="40" viewBox="0 0 38 40"><rect y="1" width="38" height="38" rx="4" fill="#999" /></svg></button>
      <button type="button" class="plain" aria-label="主屏幕"><svg width="38" height="40" viewBox="0 0 38 40"><circle cx="19" cy="20" r="18" fill="#999" /></svg></button>
      <button type="button" class="plain" aria-label="后退"><svg width="36" height="42" viewBox="0 0 36 42"><path d="M32 1Q35 0 35 3V39Q35 42 32 41L1 22Q-1 21 1 20Z" fill="#999" /></svg></button>
    </div>
  </div>
</template>

<style>
body {
  margin: 0;
  background: #fff;
}
</style>

<style scoped>
.phone {
  font-family: Roboto, "Noto Sans CJK SC", sans-serif;
  color: #333;
  background: #fff;
  overflow: hidden;
}
.phone * {
  box-sizing: border-box;
}
button {
  font: inherit;
  color: inherit;
  background: none;
  border: 0;
  padding: 0;
  white-space: nowrap;
}
a {
  color: inherit;
  text-decoration: none;
  white-space: nowrap;
}
svg {
  display: block;
  flex: none;
}
.plain {
  display: flex;
}
.up { color: #e12b2b; }
.down { color: #0c9b0c; }
.ink { color: #222; }
.amber { color: #f5b83c; }
.gold { color: #f2c11c; }
.rose { color: #cc1680; }
.violet { color: #d42bd4; }
.green { color: #129712; }

.status {
  display: flex;
  align-items: center;
  height: 105px;
  padding: 14px 28px 0 28px;
  color: #666;
}
.clock {
  font-size: 41px;
}
.wing {
  margin: 0 0 4px 28px;
}
.status-right {
  display: flex;
  align-items: center;
  margin-left: auto;
}
.buzz { margin-left: 31px; }
.speed {
  display: flex;
  flex-direction: column;
  align-items: center;
  margin-left: 19px;
  font-size: 18px;
  line-height: 18px;
  font-weight: 500;
}
.speed small {
  font-size: 15px;
  line-height: 16px;
}
.hd {
  display: flex;
  flex-direction: column;
  align-items: center;
  gap: 1px;
  width: 21px;
  padding: 1px 0;
  margin-left: 9px;
  border-radius: 3px;
  background: #666;
  color: #fff;
  font-size: 17px;
  font-weight: 900;
  line-height: 16px;
}
.net {
  display: flex;
  flex-direction: column;
  align-items: center;
  gap: 3px;
  margin-left: 7px;
  font-size: 22px;
  line-height: 22px;
  font-weight: 500;
}
.signal { margin-left: 8px; }
.battery { margin: 0 5px 0 19px; }

.top {
  display: grid;
  grid-template-columns: 1fr auto 1fr;
  align-items: center;
  height: 109px;
  padding: 0 25px 4px 21px;
  border-bottom: 2px solid #d9d9d9;
}
.top-left, .top-right {
  display: flex;
  align-items: center;
}
.top-left { gap: 20px; }
.top-right {
  justify-content: flex-end;
  gap: 37px;
}
.logo {
  display: flex;
  flex-direction: column;
  align-items: center;
  width: 57px;
  height: 57px;
  padding-top: 4px;
  border-radius: 13px;
  background: #ff4400;
  color: #fff;
  font-size: 20px;
  line-height: 24px;
  font-weight: 700;
}
.title {
  padding-top: 8px;
  text-align: center;
}
.title h1 {
  margin: 0;
  font-size: 40px;
  line-height: 50px;
  font-weight: 400;
  color: #222;
}
.title p {
  display: flex;
  align-items: center;
  gap: 3px;
  margin: 0;
  font-size: 31px;
  line-height: 48px;
  color: #666;
}
.title b {
  height: 30px;
  min-width: 32px;
  padding: 0 2px;
  border: 1px solid #777;
  border-radius: 6px;
  font-size: 26px;
  line-height: 27px;
  font-weight: 400;
}
.title p svg { margin-left: 6px; }

.quote {
  display: flex;
  gap: 22px;
  padding: 8px 20px 11px;
  border-bottom: 2px solid #ebebeb;
  font-size: 35px;
}
.main-price {
  flex: 243;
}
.main-price strong {
  display: block;
  padding-top: 2px;
  font-size: 68px;
  line-height: 84px;
  font-weight: 500;
  color: #0c9b0c;
}
.main-price p {
  display: flex;
  justify-content: space-between;
  margin: 0;
  line-height: 40px;
}
.quote-grid {
  flex: 773;
  display: grid;
  grid-template-columns: repeat(3, 1fr);
  column-gap: 22px;
}
.cell {
  display: flex;
  justify-content: space-between;
  align-items: center;
  height: 63px;
  white-space: nowrap;
}
.end { justify-content: flex-end; }
.label {
  display: flex;
  align-items: center;
  font-size: 34px;
  color: #666;
}
.label sup {
  align-self: flex-start;
  font-size: 17px;
  line-height: 17px;
}
.info {
  width: 26px;
  height: 26px;
  margin: 0 0 2px 2px;
  fill: none;
  stroke: #999;
  stroke-width: 2;
}
.more {
  width: 104px;
  height: 47px;
  border: 2px solid #e8e8e8;
  border-radius: 7px;
  font-size: 29px;
  line-height: 40px;
}

.notice {
  display: flex;
  align-items: center;
  height: 88px;
  padding: 0 25px;
  border-bottom: 2px solid #d9d9d9;
  font-size: 33px;
}
.notice a {
  margin-left: 24px;
  padding-bottom: 5px;
}
.dot {
  width: 16px;
  height: 16px;
  margin: 0 26px 2px auto;
  border-radius: 50%;
  background: #f32222;
}

.periods, .sections {
  display: flex;
  border-bottom: 2px solid #d9d9d9;
  font-size: 36px;
  color: #666;
}
.periods {
  height: 86px;
}
.periods button {
  flex: 163;
  display: flex;
  align-items: center;
  justify-content: center;
}
.periods .gear { flex: 104; }
.periods span, .sections span {
  position: relative;
}
.on { color: #e8590c; }
.on span::after {
  content: "";
  position: absolute;
  left: 50%;
  bottom: -13px;
  width: 50px;
  height: 6px;
  margin-left: -25px;
  border-radius: 2px;
  background: #e8590c;
}
.caret {
  position: absolute;
  left: 100%;
  top: 18px;
  margin-left: 6px;
}

.charts {
  position: relative;
}
.bar {
  display: flex;
  align-items: center;
  padding: 0 16px;
  white-space: nowrap;
}
.bar > span {
  display: flex;
  align-items: center;
}
.chip {
  display: flex;
  align-items: center;
  height: 38px;
  padding: 0 8px 0 6px;
  border: 2px solid #e6e8ec;
  border-radius: 6px;
  background: #f5f6f9;
  color: #222;
  font-size: 29px;
}
.arrow {
  width: 16px;
  height: 28px;
  margin-left: 9px;
  fill: none;
  stroke: currentColor;
  stroke-width: 2;
}
.average {
  height: 51px;
  font-size: 30px;
}
.average > span { margin-left: 10px; }
.average > .tight {
  padding: 0 5px 0 7px;
}
.average > .chip { font-size: 30px; }
.chip svg { margin-left: 12px; }
.tight svg { margin-left: 2px; }
.average .dk {
  margin: 0 40px 0 auto;
  padding: 0 4px 0 13px;
}
.dk svg {
  align-self: flex-end;
  margin: 0 0 5px 10px;
}

.frame {
  position: relative;
  margin: 0 12px;
  border: 2px solid #e4e4e4;
}
.price { height: 632px; }
.volume { height: 233px; }
.macd { height: 234px; }
.plot {
  position: relative;
  width: 100%;
  height: 100%;
  fill: none;
}
.line {
  fill: none;
  stroke-width: 3;
  stroke-linejoin: round;
  vector-effect: non-scaling-stroke;
}
.grid {
  stroke: #e2e2e2;
  stroke-width: 2;
  stroke-dasharray: 2 2;
  vector-effect: non-scaling-stroke;
}
.mark, .peak, .trough {
  position: absolute;
  left: 1px;
  font-size: 31px;
  line-height: 24px;
  color: #8a8a8a;
}
.big {
  top: 16px;
  font-size: 33px;
}
.high {
  top: 11px;
  font-size: 33px;
}
.low {
  bottom: 3px;
  font-size: 33px;
}
.peak, .trough { color: #222; }
.peak {
  left: auto;
  right: 217px;
  top: 6px;
}
.trough {
  left: 52px;
  top: 594px;
}
.watermark {
  position: absolute;
  left: 50%;
  top: 50%;
  width: 340px;
  margin: -60px 0 0 -168px;
  color: #f7f7f7;
  font-size: 85px;
  line-height: 120px;
  font-weight: 900;
}
.round {
  position: absolute;
  bottom: 7px;
  display: flex;
  align-items: center;
  justify-content: center;
  width: 58px;
  height: 58px;
  border-radius: 50%;
  background: rgba(253, 234, 224, 0.75);
}
.round svg {
  fill: none;
  stroke: #e8590c;
  stroke-width: 3;
}
.prev { left: 24px; }
.full { left: 171px; }
.event {
  position: absolute;
  bottom: 8px;
  width: 16px;
  height: 16px;
  margin-left: -9px;
  border-radius: 50%;
  background: #f32222;
}
.sell {
  position: absolute;
  bottom: 1px;
  margin-left: -10px;
  color: #c33030;
  font-size: 32px;
  line-height: 36px;
  font-weight: 500;
}

.volume-bar {
  height: 52px;
  padding-right: 12px;
  font-size: 26px;
}
.volume-bar .chip, .macd-bar .chip {
  padding-right: 6px;
  margin-right: 3px;
}
.volume-bar > span { margin-right: 12px; }
.volume-bar .arrow {
  width: 14px;
  margin-left: 8px;
}
.volume-bar .virtual {
  margin-left: 5px;
  color: #888;
}
.fold {
  display: flex;
  align-items: center;
  justify-content: center;
  width: 38px;
  height: 50px;
  margin-left: auto;
  border-radius: 10px 0 0 10px;
  background: #999;
}
.macd-bar {
  height: 52px;
  font-size: 32px;
}
.macd-bar > span { margin-right: 15px; }
.macd-bar .arrow { margin-left: 7px; }
.dates {
  display: flex;
  justify-content: space-between;
  height: 69px;
  padding: 0 17px;
  font-size: 32px;
  line-height: 54px;
  color: #8a8a8a;
}
.ink-layer {
  position: absolute;
  inset: 0;
  width: 100%;
  height: 100%;
  fill: none;
  stroke: #02c853;
  stroke-width: 16;
  stroke-linecap: round;
  stroke-linejoin: round;
  pointer-events: none;
}

.banner {
  display: flex;
  align-items: center;
  height: 75px;
  margin: 0 15px 13px;
  padding: 0 32px 0 25px;
  border-radius: 38px;
  background: #fdeee5;
  color: #e35a0c;
  font-size: 33px;
}
.banner a {
  margin-left: 44px;
  padding-bottom: 5px;
}
.banner i {
  width: 1px;
  height: 30px;
  margin: 0 14px 0 auto;
  background: #e39a6c;
}
.sections {
  height: 89px;
  padding: 0 36px;
  border-top: 2px solid #d9d9d9;
}
.sections button { flex: 1; }
.sections .on span::after { bottom: -12px; }

.cards {
  display: flex;
  gap: 16px;
  height: 68px;
  padding: 10px 30px 0;
  overflow: hidden;
}
.card {
  position: relative;
  display: flex;
  align-items: center;
  gap: 11px;
  flex: 0 0 450px;
  height: 90px;
  padding: 0 20px;
  border-radius: 20px;
  background: #fff5f3;
  overflow: hidden;
  font-size: 34px;
}
.card > * { position: relative; }
.card b { padding-bottom: 4px; }
.card .ghost {
  position: absolute;
  right: 0;
  top: 0;
}
.vs {
  width: 40px;
  height: 40px;
  border-radius: 50%;
  background: #e06560;
  color: #fff;
  font-size: 23px;
  line-height: 40px;
  font-weight: 900;
  font-style: italic;
  text-align: center;
}

.dock {
  display: flex;
  height: 114px;
  border-top: 2px solid #d4d6d9;
  background: #f7f8fa;
  color: #666;
}
.dock a {
  flex: 1;
  display: flex;
  flex-direction: column;
  align-items: center;
  padding-top: 7px;
  font-size: 34px;
  line-height: 60px;
}
.dock a svg {
  fill: none;
  stroke: #666;
  stroke-width: 3;
}
.index {
  flex: 0 0 230px;
  display: flex;
  flex-direction: column;
  align-items: flex-start;
  padding: 6px 0 0 5px;
  font-size: 32px;
  line-height: 36px;
}
.index svg { margin: 0 0 6px 102px; }
.index strong {
  margin-left: 31px;
  font-size: 37px;
  line-height: 46px;
  font-weight: 400;
  color: #0c9b0c;
}
.index em {
  font-size: 30px;
  font-style: normal;
  color: #0c9b0c;
}
.system {
  display: flex;
  justify-content: center;
  align-items: center;
  gap: 218px;
  height: 120px;
  padding-right: 2px;
  background: #000;
}
</style>
